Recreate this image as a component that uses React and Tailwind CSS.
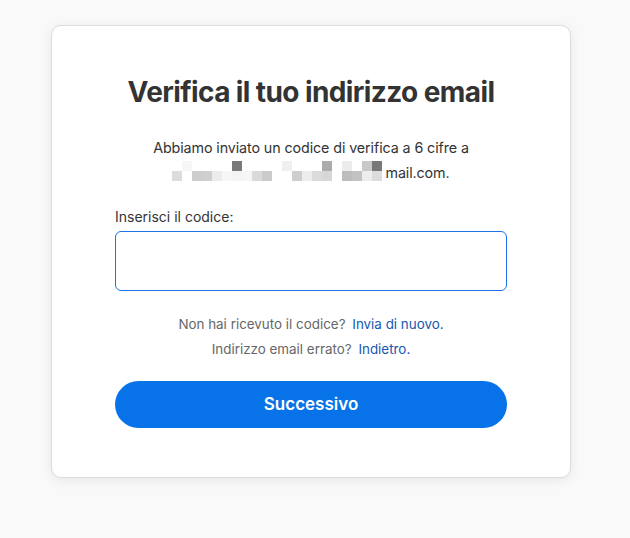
import React from 'react'

const blocks = [
  // [col, row, colour]
  [1, 0, '#f6f6f6'], [6, 0, '#7a7a7a'], [11, 0, '#efefef'], [15, 0, '#ababab'],
  [17, 0, '#ececec'], [19, 0, '#c9c9c9'], [20, 0, '#787878'],
  [0, 1, '#dcdcdc'], [2, 1, '#cdcdcd'], [3, 1, '#cfcfcf'], [4, 1, '#ececec'],
  [5, 1, '#f6f6f6'], [6, 1, '#f4f4f4'], [7, 1, '#f6f6f6'], [8, 1, '#dadada'],
  [9, 1, '#cbcbcb'], [12, 1, '#cecece'], [13, 1, '#ededed'], [14, 1, '#dbdbdb'],
  [15, 1, '#d7d7d7'], [17, 1, '#bdbdbd'], [18, 1, '#c2c2c2'], [19, 1, '#ededed'],
  [20, 1, '#dcdcdc'],
]

const Redacted = () => (
  <svg width="210" height="20" viewBox="0 0 210 20" className="inline-block align-[-3px] mr-[3px]">
    {blocks.map(([c, r, fill], i) => (
      <rect key={i} x={c * 10} y={r * 10} width="10" height="10" fill={fill} />
    ))}
  </svg>
)

export default function App() {
  return (
    <div className="min-h-[538px] bg-[#f9f9f9] pt-[25px] font-['Inter',sans-serif]">
      <div className="ml-[51px] w-[520px] bg-white border border-[#dcdcdc] rounded-[10px] shadow-[0_2px_12px_rgba(0,0,0,0.08)] px-[63px] pt-[48px] pb-[49px]">
        <h1 className="text-center text-[28px] font-bold tracking-[-0.6px] text-[#333] leading-[36px]">
          Verifica il tuo indirizzo email
        </h1>
        <p className="mt-[25px] text-center text-[14.3px] tracking-[-0.1px] leading-[25px] text-[#333]">
          Abbiamo inviato un codice di verifica a 6 cifre a
          <br />
          <Redacted />mail.com.
        </p>
        <label className="block mt-[22px] text-[14px] text-[#333] leading-[20px]">Inserisci il codice:</label>
        <input
          type="text"
          className="mt-[4px] block w-full h-[60px] rounded-[6px] border border-[#1a73e8] outline-none px-3 text-[16px]"
        />
        <div className="mt-[23px] flex flex-col items-center gap-[5px] text-[13.4px] leading-[20px] text-[#666]">
          <p>
            Non hai ricevuto il codice?{' '}
            <a href="#" className="ml-[3px] text-[#1658b0]">Invia di nuovo.</a>
          </p>
          <p>
            Indirizzo email errato?{' '}
            <a href="#" className="ml-[3px] text-[#1658b0]">Indietro.</a>
          </p>
        </div>
        <button className="mt-[22px] w-full h-[47px] rounded-full bg-[#0872e9] text-white text-[17px] font-semibold">
          Successivo
        </button>
      </div>
    </div>
  )
}
